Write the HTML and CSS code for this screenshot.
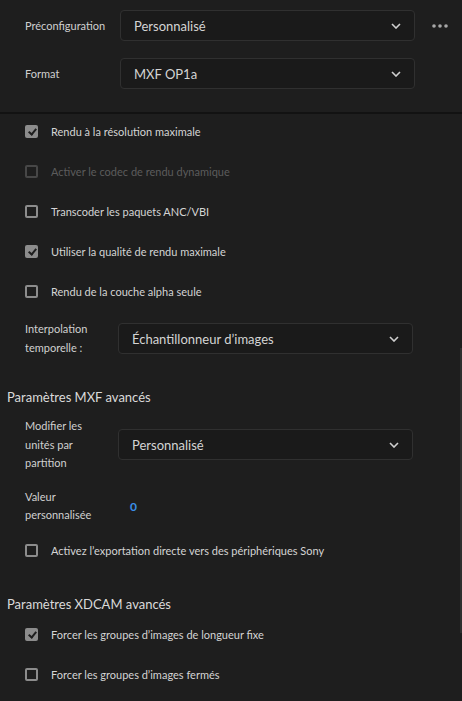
FILE: index.html
```html
<!DOCTYPE html>
<html lang="fr">

<head>
    <title>Paramètres d'exportation</title>
    <meta charset="utf-8">
    <link rel="stylesheet" href="styles.css">
</head>

<body>
    <div class="panneau">
        <div class="entete">
            <div class="ligne">
                <span class="etiquette">Préconfiguration</span>
                <div class="liste">
                    <span>Personnalisé</span>
                    <svg class="chevron" viewBox="0 0 10 6"><path d="M1 1l4 4 4-4"/></svg>
                </div>
                <svg class="plus" viewBox="0 0 16 4"><circle cx="2" cy="2" r="1.8"/><circle cx="8" cy="2" r="1.8"/><circle cx="14" cy="2" r="1.8"/></svg>
            </div>
            <div class="ligne">
                <span class="etiquette">Format</span>
                <div class="liste">
                    <span>MXF OP1a</span>
                    <svg class="chevron" viewBox="0 0 10 6"><path d="M1 1l4 4 4-4"/></svg>
                </div>
            </div>
        </div>

        <div class="corps">
            <div class="cases">
                <label class="case coche"><span class="boite"></span>Rendu à la résolution maximale</label>
                <label class="case inactif"><span class="boite"></span>Activer le codec de rendu dynamique</label>
                <label class="case"><span class="boite"></span>Transcoder les paquets ANC/VBI</label>
                <label class="case coche"><span class="boite"></span>Utiliser la qualité de rendu maximale</label>
                <label class="case"><span class="boite"></span>Rendu de la couche alpha seule</label>
            </div>

            <div class="ligne interp">
                <span class="etiquette">Interpolation<br>temporelle :</span>
                <div class="liste">
                    <span>Échantillonneur d’images</span>
                    <svg class="chevron" viewBox="0 0 10 6"><path d="M1 1l4 4 4-4"/></svg>
                </div>
            </div>

            <h3 class="titre mxf">Paramètres MXF avancés</h3>

            <div class="ligne modif">
                <span class="etiquette">Modifier les<br>unités par<br>partition</span>
                <div class="liste">
                    <span>Personnalisé</span>
                    <svg class="chevron" viewBox="0 0 10 6"><path d="M1 1l4 4 4-4"/></svg>
                </div>
            </div>

            <div class="ligne valeur">
                <span class="etiquette">Valeur<br>personnalisée</span>
                <span class="nombre">0</span>
            </div>

            <label class="case sony"><span class="boite"></span>Activez l’exportation directe vers des périphériques Sony</label>

            <h3 class="titre xdcam">Paramètres XDCAM avancés</h3>

            <div class="cases">
                <label class="case coche"><span class="boite"></span>Forcer les groupes d’images de longueur fixe</label>
                <label class="case"><span class="boite"></span>Forcer les groupes d’images fermés</label>
            </div>
        </div>

        <div class="defilement"></div>
    </div>
</body>

</html>
```

FILE: styles.css
```css
html {
    background-color: #1e1e1e;
}

body {
    margin: 0;
    font-family: Lato, "Open Sans", sans-serif;
    color: #d2d2d2;
}

.panneau {
    position: relative;
    width: 462px;
    height: 701px;
    overflow: hidden;
}

.entete {
    display: flex;
    flex-direction: column;
    gap: 17px;
    padding: 10px 0 23px 25px;
    border-bottom: 2px solid #121212;
}

.ligne {
    display: flex;
    align-items: center;
}

.etiquette {
    width: 95px;
    font-size: 11px;
    line-height: 18.5px;
    color: #d0d0d0;
}

.entete .etiquette {
    padding-top: 2px;
}

.liste {
    box-sizing: border-box;
    width: 295px;
    height: 31px;
    display: flex;
    align-items: center;
    justify-content: space-between;
    padding: 0 13px 0 13px;
    background-color: #1a1a1a;
    border: 1px solid #303030;
    border-radius: 4px;
    font-size: 13px;
    color: #d4d4d4;
}

.chevron {
    width: 10px;
    height: 6px;
    fill: none;
    stroke: #cfcfcf;
    stroke-width: 1.6;
}

.plus {
    width: 16px;
    height: 4px;
    margin-left: 17px;
    fill: #a8a8a8;
}

.corps {
    padding: 7px 0 0 25px;
}

.cases {
    display: flex;
    flex-direction: column;
    gap: 20px;
}

.case {
    display: flex;
    align-items: center;
    height: 20px;
    font-size: 11px;
    color: #d4d4d4;
}

.boite {
    box-sizing: border-box;
    position: relative;
    width: 13px;
    height: 13px;
    margin-right: 13px;
    border: 2px solid #8c8c8c;
    border-radius: 2px;
}

.coche .boite {
    background-color: #8c8c8c;
}

.coche .boite::after {
    content: "";
    position: absolute;
    left: 3px;
    top: 0px;
    width: 3px;
    height: 6px;
    border: solid #1e1e1e;
    border-width: 0 2px 2px 0;
    transform: rotate(40deg);
}

.inactif {
    color: #5c5c5c;
}

.inactif .boite {
    border-color: #474747;
}

.interp {
    margin-top: 19px;
}

.interp .etiquette,
.modif .etiquette,
.valeur .etiquette {
    width: 93px;
}

.titre {
    margin: 0 0 0 -18px;
    font-size: 13px;
    font-weight: normal;
    line-height: 18px;
    color: #dadada;
}

.mxf {
    margin-top: 31px;
}

.modif {
    margin-top: 11px;
}

.valeur {
    margin-top: 15px;
}

.nombre {
    margin-left: 12px;
    font-size: 12px;
    font-weight: bold;
    color: #3a8fe8;
}

.sony {
    margin-top: 16px;
}

.xdcam {
    margin-top: 34px;
    margin-bottom: 12px;
}

.defilement {
    position: absolute;
    right: 0;
    top: 348px;
    width: 2px;
    height: 285px;
    background-color: #2e2e2e;
}
```
